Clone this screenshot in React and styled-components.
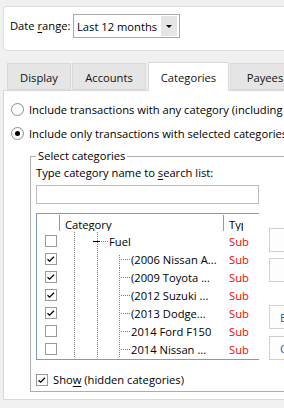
import React from 'react';
import styled, { createGlobalStyle } from 'styled-components';

const GlobalStyle = createGlobalStyle`
  html, body {
    margin: 0;
    padding: 0;
    background: #f0f0f0;
  }
  body {
    font-family: "Open Sans", "Noto Sans", sans-serif;
    font-size: 11.2px;
    color: #000;
  }
  * { box-sizing: border-box; }
`;

const Screen = styled.div`
  width: 284px;
  height: 408px;
  overflow: hidden;
  background: #f0f0f0;
  padding-top: 6px;
`;

const FilterBar = styled.div`
  margin-left: 3px;
  width: 320px;
  height: 45px;
  background: #fff;
  border: 1px solid #dcdcdc;
  border-radius: 4px;
  display: flex;
  align-items: flex-start;
  padding: 7px 0 0 6px;
`;

const FieldLabel = styled.label`
  flex: none;
  width: 63px;
  line-height: 24px;
  white-space: nowrap;
`;

const Combo = styled.div`
  width: 107px;
  height: 24px;
  border: 1px solid #a8a8a8;
  display: flex;
  align-items: center;
  padding-left: 3px;
  background: #fff;
`;

const ComboText = styled.span`
  flex: 1;
  white-space: nowrap;
`;

const DropButton = styled.span`
  width: 16px;
  height: 20px;
  margin-right: 2px;
  background: #e5e5e5;
  display: flex;
  align-items: center;
  justify-content: center;
  &::after {
    content: '';
    border-left: 3px solid transparent;
    border-right: 3px solid transparent;
    border-top: 3px solid #000;
  }
`;

const TabBar = styled.div`
  display: flex;
  align-items: flex-end;
  margin-top: 11px;
  padding-left: 7px;
  position: relative;
  z-index: 1;
`;

const Tab = styled.div`
  flex: none;
  width: ${p => p.$w}px;
  margin-left: ${p => p.$gap || 0}px;
  height: ${p => (p.$active ? 29 : 27)}px;
  margin-bottom: ${p => (p.$active ? -1 : 0)}px;
  background: ${p => (p.$active ? '#fff' : '#e5e5e5')};
  border: 1px solid #d9d9d9;
  border-bottom: ${p => (p.$active ? 'none' : '1px solid #d9d9d9')};
  display: flex;
  align-items: center;
  justify-content: center;
  padding-top: ${p => (p.$active ? 0 : 1)}px;
  color: #111;
  white-space: nowrap;
`;

const Panel = styled.div`
  margin-left: 3px;
  width: 320px;
  height: 310px;
  background: #fff;
  border: 1px solid #d9d9d9;
  padding: 10px 0 0 7px;
  display: flex;
  flex-direction: column;
  gap: 8px;
`;

const OptionRow = styled.label`
  display: flex;
  align-items: center;
  gap: 5px;
  height: 16px;
  white-space: nowrap;
`;

const Radio = styled.span`
  flex: none;
  width: 13px;
  height: 13px;
  border-radius: 50%;
  border: 1px solid #8c8c8c;
  background: #fff;
  display: flex;
  align-items: center;
  justify-content: center;
  &::after {
    content: '';
    width: 5px;
    height: 5px;
    border-radius: 50%;
    background: ${p => (p.$on ? '#000' : 'transparent')};
  }
`;

const Group = styled.fieldset`
  margin: 0 0 0 19px;
  width: 290px;
  min-width: 0;
  border: 1px solid #adadad;
  padding: 0 0 5px 5px;
`;

const Legend = styled.legend`
  padding: 0 2px;
  line-height: 14px;
  white-space: nowrap;
`;

const SearchLabel = styled.div`
  margin-top: 3px;
  line-height: 14px;
  white-space: nowrap;
`;

const Key = styled.u`
  text-decoration: underline;
  text-underline-offset: 2px;
`;

const SearchInput = styled.input`
  display: block;
  margin-top: 5px;
  width: 223px;
  height: 19px;
  border: 1px solid #bcbcbc;
  padding: 0 2px;
  font: inherit;
  outline: none;
`;

const ListArea = styled.div`
  display: flex;
  gap: 10px;
  margin-top: 9px;
`;

const List = styled.div`
  flex: none;
  width: 223px;
  border: 1px solid #7f9db9;
  border-right: none;
  background: #fff;
`;

const Row = styled.div`
  display: grid;
  grid-template-columns: 22px 164px 36px;
  height: 18px;
  align-items: center;
  white-space: nowrap;
`;

const HeadCell = styled.div`
  height: 16px;
  display: flex;
  align-items: center;
  padding: 2px 0 0 5px;
  border-left: ${p => (p.$divider ? '1px solid #9a9a9a' : 'none')};
  overflow: hidden;
  width: ${p => (p.$w ? `${p.$w}px` : 'auto')};
`;

const CheckCell = styled.div`
  padding-left: 8px;
  display: flex;
  align-items: center;
`;

const NameCell = styled.div`
  display: flex;
  align-items: center;
  height: 18px;
`;

const TypeCell = styled.div`
  padding-left: 6px;
  color: #ff0000;
`;

const Box = styled.span`
  flex: none;
  width: 12px;
  height: 12px;
  border: 1px solid #9a9a9a;
  background: #fff;
  display: flex;
  align-items: center;
  justify-content: center;
`;

const ButtonColumn = styled.div`
  display: flex;
  flex-direction: column;
`;

const SideButton = styled.div`
  width: 80px;
  height: 24px;
  margin-top: ${p => p.$top}px;
  border: 1px solid #d0d0d0;
  background: #fdfdfd;
  padding-left: 10px;
  display: flex;
  align-items: center;
  color: #0063c6;
  white-space: nowrap;
`;

const ShowRow = styled.label`
  display: flex;
  align-items: center;
  gap: 5px;
  height: 13px;
  margin-top: 13px;
  white-space: nowrap;
`;

function CheckBox({ checked }) {
  return (
    <Box>
      {checked && (
        <svg width="10" height="10" viewBox="0 0 10 10">
          <path d="M1.5 5.2 L3.6 7.2 L8 2.8" fill="none" stroke="#000" strokeWidth="1.3" />
        </svg>
      )}
    </Box>
  );
}

const DOT = { stroke: '#7a7a7a', strokeWidth: 1, strokeDasharray: '1 1' };

function TreeLines({ parent, first }) {
  const w = parent ? 50 : 72;
  return (
    <svg width={w} height="18" style={{ flex: 'none' }}>
      <line x1="15.5" y1="0" x2="15.5" y2="18" {...DOT} />
      <line x1="38.5" y1="0" x2="38.5" y2="18" {...DOT} />
      {parent ? (
        <>
          <line x1="34" y1="9.5" x2="41" y2="9.5" stroke="#000" strokeWidth="1" />
          <line x1="42" y1="9.5" x2="50" y2="9.5" {...DOT} />
        </>
      ) : (
        <>
          <line x1="60.5" y1={first ? 5 : 0} x2="60.5" y2="18" {...DOT} />
          <line x1="62" y1="9.5" x2="72" y2="9.5" {...DOT} />
        </>
      )}
    </svg>
  );
}

const categories = [
  { name: 'Fuel', checked: false, parent: true },
  { name: '(2006 Nissan A...', checked: true, first: true },
  { name: '(2009 Toyota ...', checked: true },
  { name: '(2012 Suzuki ...', checked: true },
  { name: '(2013 Dodge...', checked: true },
  { name: '2014 Ford F150', checked: false },
  { name: '2014 Nissan ...', checked: false },
];

const tabs = [
  { label: 'Display', w: 64, gap: 0 },
  { label: 'Accounts', w: 74, gap: 1 },
  { label: 'Categories', w: 81, gap: 2, active: true },
  { label: 'Payees', w: 70, gap: 1 },
];

export default function App() {
  return (
    <>
      <GlobalStyle />
      <Screen>
        <FilterBar>
          <FieldLabel>Date <Key>r</Key>ange:</FieldLabel>
          <Combo>
            <ComboText>Last 12 months</ComboText>
            <DropButton />
          </Combo>
        </FilterBar>

        <TabBar>
          {tabs.map(t => (
            <Tab key={t.label} $w={t.w} $gap={t.gap} $active={t.active}>{t.label}</Tab>
          ))}
        </TabBar>

        <Panel>
          <OptionRow>
            <Radio />
            <span>Include transactions with any category (including uncategorized)</span>
          </OptionRow>
          <OptionRow>
            <Radio $on />
            <span>Include only transactions with selected categories</span>
          </OptionRow>

          <Group>
            <Legend>Select categories</Legend>
            <SearchLabel>Type category name to <Key>s</Key>earch list:</SearchLabel>
            <SearchInput type="text" />
            <ListArea>
              <List>
                <Row>
                  <div />
                  <HeadCell $divider>Category</HeadCell>
                  <HeadCell $divider $w={20}>Type</HeadCell>
                </Row>
                {categories.map(c => (
                  <Row key={c.name}>
                    <CheckCell><CheckBox checked={c.checked} /></CheckCell>
                    <NameCell>
                      <TreeLines parent={c.parent} first={c.first} />
                      <span>{c.name}</span>
                    </NameCell>
                    <TypeCell>Sub</TypeCell>
                  </Row>
                ))}
              </List>
              <ButtonColumn>
                <SideButton $top={15} />
                <SideButton $top={6} />
                <SideButton $top={23}>Expand all</SideButton>
                <SideButton $top={7}>Collapse all</SideButton>
              </ButtonColumn>
            </ListArea>
            <ShowRow>
              <CheckBox checked />
              <span>Sho<Key>w</Key> (hidden categories)</span>
            </ShowRow>
          </Group>
        </Panel>
      </Screen>
    </>
  );
}
